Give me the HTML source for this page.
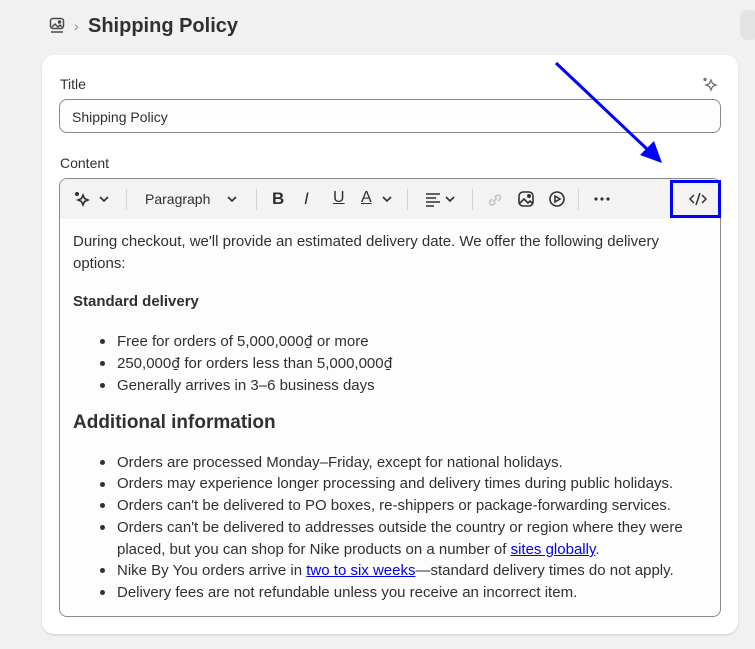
<!DOCTYPE html>
<html><head><meta charset="utf-8"><style>
*{box-sizing:border-box;margin:0;padding:0}
body{width:755px;height:649px;background:#f1f1f1;font-family:"Liberation Sans",sans-serif;color:#303030;position:relative;overflow:hidden}
.abs{position:absolute}
.card{left:42px;top:55px;width:696px;height:579px;background:#fff;border-radius:12px;box-shadow:0 1px 2px rgba(0,0,0,.15)}
.lbl{font-size:14px;color:#303030}
.input{left:59px;top:99px;width:662px;height:34px;border:1px solid #8a8a8a;border-radius:8px;background:#fdfdfd;font-size:14px;padding:9px 12px}
.editor{left:59px;top:178px;width:662px;height:439px;border:1px solid #8a8a8a;border-radius:8px;background:#fdfdfd;overflow:hidden}
.tb{position:absolute;left:0;top:0;width:660px;height:40px;background:#f3f3f3}
.sep{position:absolute;top:10px;width:1px;height:21px;background:#d4d4d4}
.t{position:absolute;font-size:15px;color:#303030;white-space:nowrap;line-height:22px}
.d{font-family:"DejaVu Sans",sans-serif;font-size:14px}
.b{position:absolute;width:5px;height:5px;border-radius:50%;background:#303030}
a{color:#0000ee;text-decoration:underline}
svg{position:absolute}
</style></head><body>
<div class="abs" style="left:740px;top:10px;width:20px;height:30px;background:#e3e3e3;border-radius:8px"></div>
<svg style="left:49px;top:17px" width="16" height="18" viewBox="0 0 16 18" fill="none" stroke="#4a4a4a" stroke-width="1.5"><rect x="1.5" y="1.5" width="13" height="10" rx="2.5"/><path d="M3 10l3-3 3 3 2-2 2 2"/><circle cx="10.5" cy="5" r="1" fill="#4a4a4a"/><path d="M2 15h12"/></svg>
<div class="abs" style="left:74px;top:18px;font-size:14px;color:#888">›</div>
<div class="abs" style="left:88px;top:15px;font-size:20px;font-weight:bold;color:#303030">Shipping Policy</div>
<div class="abs card"></div>
<div class="abs lbl" style="left:60px;top:76px">Title</div>
<svg style="left:701px;top:76px" width="18" height="18" viewBox="0 0 18 18" fill="none" stroke="#777" stroke-width="1.4"><path d="M10 4l1.5 3.5L15 9l-3.5 1.5L10 14l-1.5-3.5L5 9l3.5-1.5z"/><circle cx="4" cy="3.5" r="1" fill="#777"/></svg>
<div class="abs input">Shipping Policy</div>
<div class="abs lbl" style="left:60px;top:155px">Content</div>
<div class="abs editor">
 <div class="tb">
  <svg style="left:13px;top:11px" width="18" height="18" viewBox="0 0 18 18" fill="none" stroke="#303030" stroke-width="1.6"><path d="M10 5l1.5 3.5L15 10l-3.5 1.5L10 15l-1.5-3.5L5 10l3.5-1.5z"/><circle cx="4" cy="4" r="1.2" fill="#303030"/></svg>
  <svg style="left:38px;top:15px" width="12" height="10" viewBox="0 0 12 10" fill="none" stroke="#303030" stroke-width="1.6"><path d="M2 3l4 4 4-4"/></svg>
  <div class="sep" style="left:66px"></div>
  <div class="t" style="left:85px;top:9px;font-size:14px">Paragraph</div>
  <svg style="left:166px;top:15px" width="12" height="10" viewBox="0 0 12 10" fill="none" stroke="#303030" stroke-width="1.6"><path d="M2 3l4 4 4-4"/></svg>
  <div class="sep" style="left:196px"></div>
  <div class="t" style="left:212px;top:9px;font-size:17px;font-weight:bold">B</div>
  <div class="t" style="left:244px;top:9px;font-size:17px;font-style:italic">I</div>
  <div class="t" style="left:273px;top:8px;font-size:16px;text-decoration:underline">U</div>
  <div class="t" style="left:301px;top:8px;font-size:16px;text-decoration:underline">A</div>
  <svg style="left:321px;top:15px" width="12" height="10" viewBox="0 0 12 10" fill="none" stroke="#303030" stroke-width="1.6"><path d="M2 3l4 4 4-4"/></svg>
  <div class="sep" style="left:347px"></div>
  <svg style="left:364px;top:12px" width="18" height="16" viewBox="0 0 18 16" fill="none" stroke="#303030" stroke-width="1.6"><path d="M2 3h14M2 7h10M2 11h14M2 15h8"/></svg>
  <svg style="left:384px;top:15px" width="12" height="10" viewBox="0 0 12 10" fill="none" stroke="#303030" stroke-width="1.6"><path d="M2 3l4 4 4-4"/></svg>
  <div class="sep" style="left:412px"></div>
  <svg style="left:426px;top:12px" width="18" height="18" viewBox="0 0 18 18" fill="none" stroke="#c4c4c4" stroke-width="1.6"><path d="M7 11l4-4M6 8l-2 2a2.5 2.5 0 003.5 3.5l2-2M12 10l2-2a2.5 2.5 0 00-3.5-3.5l-2 2"/></svg>
  <svg style="left:457px;top:11px" width="18" height="18" viewBox="0 0 18 18" fill="none" stroke="#303030" stroke-width="1.6"><rect x="2" y="2" width="14" height="14" rx="4"/><path d="M3 13l4-4 4 4 2-2 3 3"/><circle cx="12" cy="6" r="1.2" fill="#303030"/></svg>
  <svg style="left:488px;top:11px" width="18" height="18" viewBox="0 0 18 18" fill="none" stroke="#303030" stroke-width="1.6"><circle cx="9" cy="9" r="7"/><path d="M7 6v6l5-3z"/></svg>
  <div class="sep" style="left:518px"></div>
  <svg style="left:533px;top:17px" width="18" height="6" viewBox="0 0 18 6" fill="#303030"><circle cx="3" cy="3" r="1.6"/><circle cx="9" cy="3" r="1.6"/><circle cx="15" cy="3" r="1.6"/></svg>
  <svg style="left:628px;top:12px" width="20" height="16" viewBox="0 0 20 16" fill="none" stroke="#303030" stroke-width="1.5"><path d="M6 4L2 8l4 4M14 4l4 4-4 4M12 2L8 14"/></svg>
 </div>
 <div class="t" style="left:13px;top:52px">During checkout, we'll provide an estimated delivery date. We offer the following delivery</div>
 <div class="t" style="left:13px;top:74px">options:</div>
 <div class="t" style="left:13px;top:112px;font-weight:bold">Standard delivery</div>
 <div class="b" style="left:40px;top:160px"></div><div class="t" style="left:57px;top:152px">Free for orders of 5,000,000<span class="d">₫</span> or more</div>
 <div class="b" style="left:40px;top:182px"></div><div class="t" style="left:57px;top:174px">250,000<span class="d">₫</span> for orders less than 5,000,000<span class="d">₫</span></div>
 <div class="b" style="left:40px;top:204px"></div><div class="t" style="left:57px;top:196px">Generally arrives in 3–6 business days</div>
 <div class="t" style="left:13px;top:232px;font-size:19px;font-weight:bold;line-height:24px">Additional information</div>
 <div class="b" style="left:40px;top:281px"></div><div class="t" style="left:57px;top:273px">Orders are processed Monday–Friday, except for national holidays.</div>
 <div class="b" style="left:40px;top:303px"></div><div class="t" style="left:57px;top:294px">Orders may experience longer processing and delivery times during public holidays.</div>
 <div class="b" style="left:40px;top:324px"></div><div class="t" style="left:57px;top:316px">Orders can't be delivered to PO boxes, re-shippers or package-forwarding services.</div>
 <div class="b" style="left:40px;top:346px"></div><div class="t" style="left:57px;top:338px">Orders can't be delivered to addresses outside the country or region where they were</div>
 <div class="t" style="left:57px;top:360px">placed, but you can shop for Nike products on a number of <a>sites globally</a>.</div>
 <div class="b" style="left:40px;top:389px"></div><div class="t" style="left:57px;top:381px">Nike By You orders arrive in <a>two to six weeks</a>—standard delivery times do not apply.</div>
 <div class="b" style="left:40px;top:411px"></div><div class="t" style="left:57px;top:403px">Delivery fees are not refundable unless you receive an incorrect item.</div>
</div>
<div class="abs" style="left:670px;top:180px;width:51px;height:38px;border:3px solid #0000ff"></div>
<svg style="left:0;top:0" width="755" height="649"><line x1="556" y1="63" x2="648" y2="150" stroke="#0000ff" stroke-width="3"/><path d="M662 163L640 155L654 141Z" fill="#0000ff"/></svg>
</body></html>
